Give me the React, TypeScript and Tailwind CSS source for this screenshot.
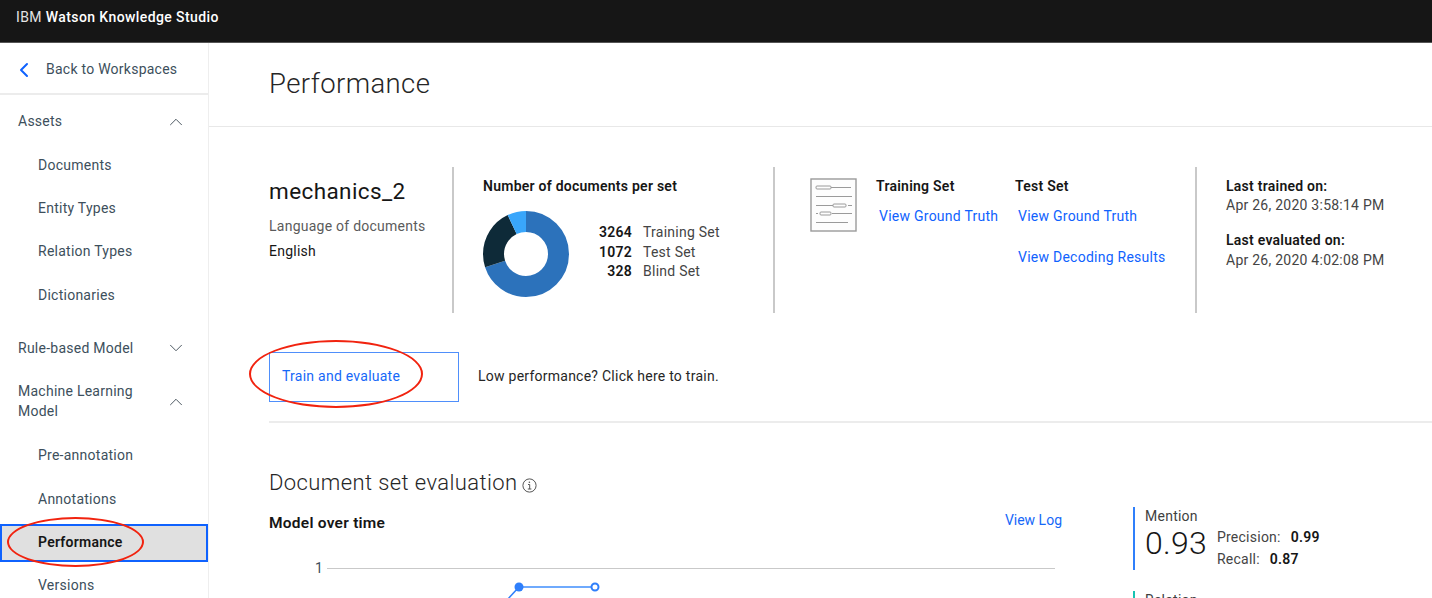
import { ChevronDown, ChevronLeft, ChevronUp } from 'lucide-react'

const assetItems = ['Documents', 'Entity Types', 'Relation Types', 'Dictionaries']

function NavItem({ label }: { label: string }) {
  return <div className="flex h-[43.3px] items-center pl-[38px] text-[#3d4f5c]">{label}</div>
}

function Group({ label, open }: { label: string; open?: boolean }) {
  const Icon = open ? ChevronUp : ChevronDown
  return (
    <div className="flex items-center justify-between pl-[18px] pr-[21px] text-[#3d4f5c]">
      <span className="w-[130px] leading-[19.5px]">{label}</span>
      <Icon size={22} strokeWidth={1} className="my-[-2px] text-[#3d4a54]" />
    </div>
  )
}

function DocIcon() {
  return (
    <svg width="47" height="54" viewBox="0 0 47 54" fill="none" stroke="#9a9a9a" className="mx-[-1px]">
      <rect x="1" y="1" width="45" height="52" strokeWidth="1.4" fill="#fdfdfd" />
      <path d="M21 9.5h20M6 18.5h36M6 27.5h17M38 27.5h4M6 35.5h2M22 35.5h20M6 44.5h32" strokeWidth="1" />
      <rect x="6" y="8" width="15" height="3" rx="1" strokeWidth="1" />
      <rect x="23" y="26" width="13" height="3" rx="1" strokeWidth="1" />
      <rect x="10" y="34" width="11" height="3" rx="1" strokeWidth="1" />
    </svg>
  )
}

function Donut() {
  return (
    <svg width="86" height="86" viewBox="0 0 86 86" className="shrink-0 -rotate-90">
      <g fill="none" strokeWidth="21">
        <circle cx="43" cy="43" r="32.5" pathLength={100} stroke="#2c72bb" strokeDasharray="70 30" />
        <circle cx="43" cy="43" r="32.5" pathLength={100} stroke="#0e2a38" strokeDasharray="23 77" strokeDashoffset="-70" />
        <circle cx="43" cy="43" r="32.5" pathLength={100} stroke="#39a6fb" strokeDasharray="7 93" strokeDashoffset="-93" />
      </g>
    </svg>
  )
}

function Oval({ className }: { className: string }) {
  return <div className={`pointer-events-none absolute rounded-[50%] border-[2.5px] border-[#f1230f] ${className}`} />
}

export default function App() {
  return (
    <div className="relative flex h-[598px] w-[1432px] flex-col overflow-hidden bg-white font-['Roboto',sans-serif] text-[14px] tracking-[0.25px] text-[#161616]">
      <header className="flex h-[43px] shrink-0 items-center border-b border-[#555] bg-[#161616] pb-[8px] pl-4 text-[14px] tracking-[0.4px] text-[#e4e4e4]">
        IBM&nbsp;<span className="font-medium text-white">Watson Knowledge Studio</span>
      </header>

      <div className="flex min-h-0 flex-1">
        <aside className="w-[209px] shrink-0 border-r border-[#eeeeee]">
          <div className="flex h-[52px] items-center border-b-2 border-[#ececec] pl-[12px] pt-[3px] text-[#3d4f5c]">
            <ChevronLeft size={24} strokeWidth={2} className="mr-[10px] text-[#0f62fe]" />
            Back to Workspaces
          </div>
          <div className="pt-[17px]">
            <Group label="Assets" open />
            <div className="pt-[12px]">
              {assetItems.map((item) => (
                <NavItem key={item} label={item} />
              ))}
            </div>
            <div className="pt-[22px]">
              <Group label="Rule-based Model" />
            </div>
            <div className="pt-[24px]">
              <Group label="Machine Learning Model" open />
            </div>
            <div className="pt-[13px]">
              <NavItem label="Pre-annotation" />
              <NavItem label="Annotations" />
              <div className="mt-[3px] flex h-[38px] items-center border-2 border-[#0f62fe] bg-[#e0e0e0] pl-[36px] font-semibold text-[#161616]">
                Performance
              </div>
              <div className="flex h-[48px] items-center pl-[38px] text-[#3d4f5c]">Versions</div>
            </div>
          </div>
        </aside>

        <main className="min-w-0 flex-1">
          <div className="flex h-[84px] items-center border-b border-[#e8e8e8] pb-[1px] pl-[60px]">
            <h1 className="text-[27.5px] font-light tracking-[0.4px] text-[#262626]">Performance</h1>
          </div>

          <div className="pl-[60px]">
            <section className="mt-10 flex h-[146px]">
              <div className="w-[185px] border-r-2 border-[#c9c9c9]">
                <div className="pt-[8px] text-[22.5px] leading-[32px] tracking-[0.4px]">mechanics_2</div>
                <div className="pt-[9px] text-[#5b5b5b]">Language of documents</div>
                <div className="pt-[4px]">English</div>
              </div>

              <div className="w-[321px] border-r-2 border-[#c9c9c9] pl-[29px]">
                <div className="pt-[9px] font-semibold">Number of documents per set</div>
                <div className="flex items-center pt-[14px]">
                  <Donut />
                  <div className="mb-[3px] grid grid-cols-[auto_auto] gap-x-[11px] pl-[30px] leading-[19.7px]">
                    <span className="text-right font-semibold">3264</span>
                    <span className="text-[#444]">Training Set</span>
                    <span className="text-right font-semibold">1072</span>
                    <span className="text-[#444]">Test Set</span>
                    <span className="text-right font-semibold">328</span>
                    <span className="text-[#444]">Blind Set</span>
                  </div>
                </div>
              </div>

              <div className="flex w-[422px] border-r-2 border-[#c9c9c9] pl-[36px]">
                <div className="pt-[11px]">
                  <DocIcon />
                </div>
                <div className="w-[140px] pl-[20px]">
                  <div className="pt-[9px] font-semibold">Training Set</div>
                  <div className="whitespace-nowrap pl-[3px] pt-[9px] text-[#0f62fe]">View Ground Truth</div>
                </div>
                <div className="pl-[19px]">
                  <div className="pt-[9px] font-semibold">Test Set</div>
                  <div className="whitespace-nowrap pl-[3px] pt-[9px] text-[#0f62fe]">View Ground Truth</div>
                  <div className="whitespace-nowrap pl-[3px] pt-[20px] text-[#0f62fe]">View Decoding Results</div>
                </div>
              </div>

              <div className="pl-[29px] leading-[20px]">
                <div className="pt-[9px] font-semibold">Last trained on:</div>
                <div className="mt-[-1px] text-[#444]">Apr 26, 2020 3:58:14 PM</div>
                <div className="pt-[15px] font-semibold">Last evaluated on:</div>
                <div className="text-[#444]">Apr 26, 2020 4:02:08 PM</div>
              </div>
            </section>

            <section className="mt-[39px] flex items-center border-b-2 border-[#ececec] pb-[19px]">
              <button className="flex h-[50px] w-[190px] items-center border border-[#4f8ffb] pb-[2px] pl-3 text-left text-[#1668f8]">
                Train and evaluate
              </button>
              <span className="pb-[1px] pl-[19px] text-[#262626]">Low performance? Click here to train.</span>
            </section>

            <h2 className="flex items-center gap-[5px] pt-[45px] text-[22px] font-light leading-[30px] tracking-[0.4px] text-[#262626]">
              Document set evaluation
              <svg width="15" height="15" viewBox="0 0 15 15" fill="none" stroke="#555" className="mt-1">
                <circle cx="7.5" cy="7.5" r="6.6" strokeWidth="1" />
                <path d="M6 6.5h1.7V11M5.8 11h3.6" strokeWidth="1" />
                <circle cx="7.4" cy="4.2" r="0.8" fill="#555" stroke="none" />
              </svg>
            </h2>

            <section className="flex pt-[1px]">
              <div className="w-[793px] shrink-0">
                <div className="flex items-center justify-between pt-[13px] leading-[20px]">
                  <span className="pt-[1px] text-[15.5px] font-semibold">Model over time</span>
                  <span className="mt-[-2px] self-start tracking-normal text-[#1668f8]">View Log</span>
                </div>
                <div className="flex items-center gap-[3px] pl-[46px] pr-[7px] pt-[25px] text-[14px] text-[#3d4f5c]">
                  <span className="w-[9px] leading-[20px]">1</span>
                  <div className="h-px flex-1 bg-[#c9c9c9]" />
                </div>
                <svg width="120" height="24" viewBox="0 0 120 24" className="ml-[228px] overflow-visible" fill="none">
                  <path d="M22 9L10 22" stroke="#2f7ffb" strokeWidth="1.5" />
                  <path d="M22 9H97" stroke="#3f8efc" strokeWidth="1.5" />
                  <circle cx="22" cy="9" r="4.5" fill="#2f7ffb" />
                  <circle cx="98" cy="9" r="3.5" fill="#fff" stroke="#2f7ffb" strokeWidth="2" />
                </svg>
              </div>

              <div className="ml-[71px] mt-[8px] shrink-0">
                <div className="h-[63px] w-[200px] border-l-2 border-[#2f7ffb] pl-[10px] leading-[18px]">
                  <div className="text-[#3f3f3f]">Mention</div>
                  <div className="flex items-start">
                    <span className="text-[32px] font-light leading-[36px]">0.93</span>
                    <div className="pl-[10px] pt-[2px] leading-[21.5px] text-[#444]">
                      <div>
                        Precision:<span className="pl-[10px] font-semibold text-[#161616]">0.99</span>
                      </div>
                      <div>
                        Recall:<span className="pl-[10px] font-semibold text-[#161616]">0.87</span>
                      </div>
                    </div>
                  </div>
                </div>
                <div className="mt-[21px] border-l-2 border-[#17c3b2] pl-[10px] leading-[18px] text-[#3f3f3f]">Relation</div>
              </div>
            </section>
          </div>
        </main>
      </div>

      <Oval className="left-[249px] top-[340px] h-[68px] w-[174px]" />
      <Oval className="left-[7px] top-[517px] h-[50px] w-[137px]" />
    </div>
  )
}
